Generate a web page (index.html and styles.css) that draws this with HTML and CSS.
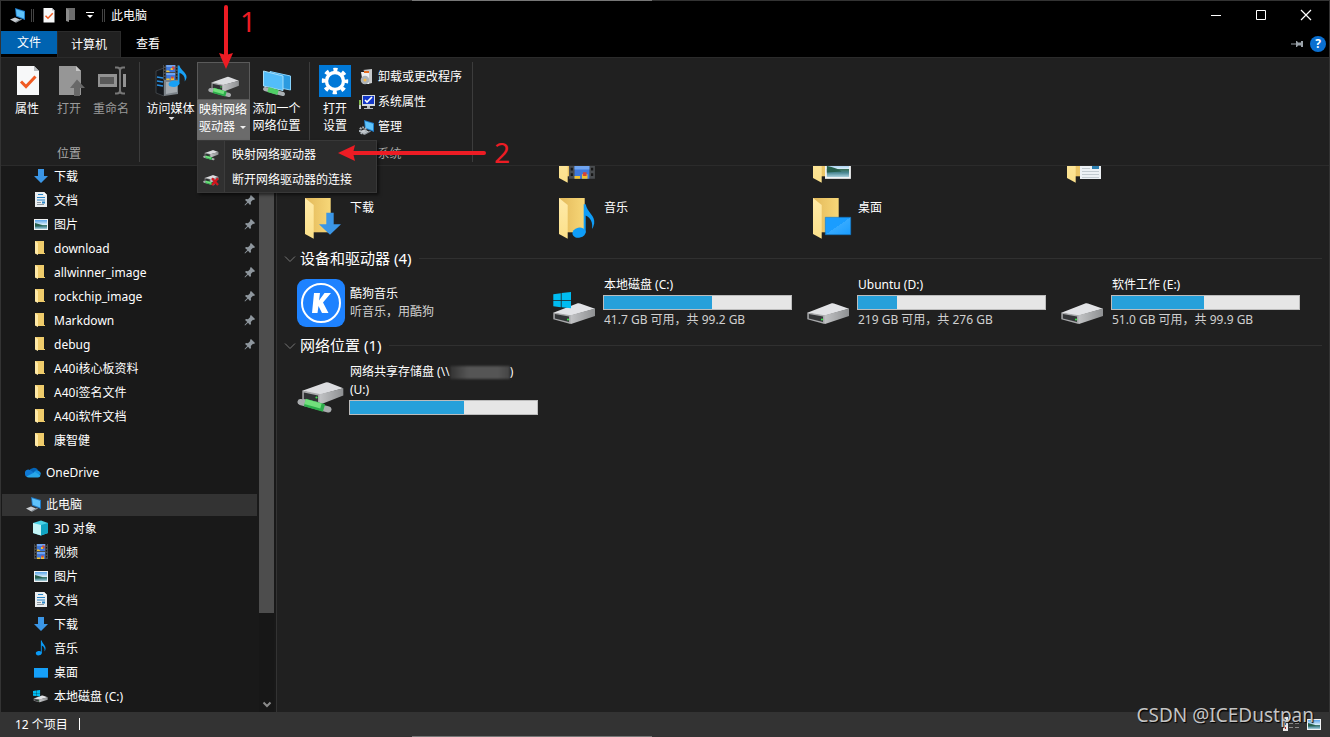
FILE: index.html
```html
<!DOCTYPE html>
<html lang="zh-CN">
<head>
<meta charset="utf-8">
<title>此电脑</title>
<link rel="stylesheet" href="styles.css">
</head>
<body>
<svg class="defs" aria-hidden="true">
  <defs>
    <linearGradient id="gold" x1="0" y1="0" x2="1" y2="0"><stop offset="0" stop-color="#e3b95a"/><stop offset="1" stop-color="#f7d778"/></linearGradient>
    <linearGradient id="flap" x1="0" y1="0" x2="0" y2="1"><stop offset="0" stop-color="#ffeaa8"/><stop offset="1" stop-color="#fbe08a"/></linearGradient>
    <linearGradient id="metal" x1="0" y1="0" x2="1" y2="0"><stop offset="0" stop-color="#c4c5c7"/><stop offset="1" stop-color="#8e9092"/></linearGradient>
    <linearGradient id="screen" x1="0" y1="0" x2="1" y2="1"><stop offset="0" stop-color="#1a9dff"/><stop offset=".5" stop-color="#1a9dff"/><stop offset=".5" stop-color="#35aaff"/><stop offset="1" stop-color="#1a9dff"/></linearGradient>
    <linearGradient id="sky" x1="0" y1="0" x2="0" y2="1"><stop offset="0" stop-color="#5aa5ea"/><stop offset=".5" stop-color="#d5ebf8"/><stop offset=".55" stop-color="#39705a"/><stop offset=".75" stop-color="#4c8996"/><stop offset="1" stop-color="#a9d0dc"/></linearGradient>
    <g id="folder">
      <path fill="url(#gold)" d="M8 4h25.700v34.300H8z"/>
      <path fill="url(#flap)" d="M8 4l8.700 7v33.700L8 40z"/>
    </g>
    <g id="drive">
      <path fill="#e2e3e6" d="M2.300 33.700 26.700 24.300Q28 24 29 24.500L44 29.700 18.500 37z"/>
      <path fill="url(#metal)" d="M18.500 36.500 44 29.500V37L20 45l-1.500-1z"/>
      <path fill="#a8a9ab" d="M2.300 33.500 19.500 36.300V45L2.300 40.300z"/>
      <path fill="#343638" d="M3.800 35 18 37.600V43L3.800 39.500z"/>
      <circle cx="17" cy="40.500" r="1.100" fill="#3fe04e"/>
    </g>
    <g id="netdrive">
      <path fill="#dcdde0" d="M5.300 18.700 28.500 10.500Q30 10 31.500 10.600L46.300 16.300 22 23z"/>
      <path fill="url(#metal)" d="M21.500 22.500 46.300 16.300V23.500L22 33z"/>
      <path fill="#a8a9ab" d="M5.300 18.500 22.500 22V33L5.300 28z"/>
      <path fill="#303234" d="M6.800 20.500 21 23.500V30L6.800 27z"/>
      <circle cx="19.500" cy="25.500" r="1.100" fill="#3fe04e"/>
      <path stroke="#a9acae" stroke-width="6" stroke-linecap="round" d="M3.500 30 31.500 37.500"/>
      <path stroke="#2cae4b" stroke-width="8" d="M8 30.500 27 36"/>
      <path stroke="#72e07c" stroke-width="5" d="M8 29.500 24 34"/>
    </g>
    <g id="winlogo"><path fill="#00bcf2" d="M0 2.300 7.500 1.200V8H0zM8.300 1.100 17.700 0V8H8.300zM0 8.700H7.500V15.300L0 14.300zM8.300 8.700H17.700V16.300L8.300 15.300z"/></g>
    <g id="note"><ellipse cx="28" cy="38.700" rx="6.700" ry="5" transform="rotate(-12 28 38.700)"/><path d="M32.700 10.300H34.700C36 18 44.500 22 43.200 29.500Q42.500 33 41 35C42 29 40 24 34.700 21.500V38.700H32.700z"/></g>
    <g id="photo"><path fill="#f1f3f4" d="M0 0h14v11H0z"/><path fill="url(#sky)" d="M1 1h12v9H1z"/><path fill="#27604e" d="M1 4Q6 5 9 7L1 7.500z"/></g>
    <g id="page"><path fill="#e9edf0" d="M0 0h9l3 3v12H0z"/><path fill="#fff" d="M9 0v3h3z"/><path stroke="#2684c7" stroke-width="1.200" d="M3 2.500h5M2 5.500h8M2 8h8"/><path stroke="#8b969e" d="M2 10.500h4M2 12.500h7"/><path fill="#2684c7" d="M7 9.500h3v2H7z"/></g>
    <g id="down"><path fill="#3b96e6" d="M4 0h6v7h4L7 14 0 7h4z"/></g>
    <g id="pc"><path fill="#1f7bc8" d="M5 1 15 4v9L6 9.500z"/><path fill="#5fc3fb" d="M6 2.300 14 4.800v6.700L6.800 8.700z"/><path fill="#c8ccd0" d="M0 12.500 5 10.500 10 12.500 5.500 15.500z"/><path fill="#8d959c" d="M5.500 14.500 11 11.800 12 12.600 6 15.800z"/></g>
    <g id="film"><path fill="#4a4d50" d="M0 0h14v15H0z"/><path fill="#3e78dc" d="M3 0h8v7H3zM3 8h8v7H3z"/><path fill="#6fa4f0" d="M3 0h8v2H3zM3 8h8v2H3z"/><path fill="#f2c230" d="M3 5.500h2L6.500 7H3zM7 3h2v2H7zM3 13.500h3V15H3zM7 12.500h3V15H7z"/><path fill="#d84335" d="M8 1.500h2.500v3H9zM7.500 11.500h2v2h-2z"/><path stroke="#171717" stroke-width="1.200" stroke-dasharray="1.500 1.500" d="M1.500 0v15M12.500 0v15"/></g>
    <g id="minifolder"><path fill="#f0cc6b" d="M0 0h9v12h1v1H3L0 12z"/><path fill="#ffe9a6" d="M0 0 3 2V14L0 12.500z"/></g>
    <g id="pin"><path fill="#8f979e" d="M6 0 10 4 9 5 8 4.800 5.800 7 6 9 5 10 3 7.700 0 10.500-.5 10 2.300 7 0 5 1 4l2 .2L5.200 2 5 1z"/></g>
    <g id="tick"><path fill="#f7f8f9" d="M0 0h17l5 5v24H0z"/><path fill="#b8bcc0" d="M17 0v5h5z"/><path fill="none" stroke="#f05a22" stroke-width="3" d="M4 15.500 9 20.500 18.500 10.500"/></g>
  </defs>
</svg>

<div class="window">
  <header class="titlebar">
    <svg class="i16" viewBox="0 0 16 16"><use href="#pc"/></svg>
    <span class="qsep"></span>
    <button class="quick" aria-label="属性"><svg class="i16" viewBox="-5 -2 32 32"><use href="#tick"/></svg></button>
    <button class="quick" aria-label="新建文件夹"><svg class="i16" viewBox="-2 0 16 16"><path fill="#6d6d6d" d="M1 1h9v12H4z"/><path fill="#8c8c8c" d="M1 1l3 2v12l-3-1z"/></svg></button>
    <button class="quick narrow" aria-label="自定义快速访问工具栏"><svg class="i8" viewBox="0 0 8 8"><path fill="#fff" d="M0 1h8v1H0zM1 4h6L4 7z"/></svg></button>
    <span class="qsep"></span>
    <h1 class="title">此电脑</h1>
    <div class="controls">
      <button aria-label="最小化"><svg class="i12" viewBox="0 0 12 12"><path stroke="#fff" d="M1 6.500h10"/></svg></button>
      <button aria-label="最大化"><svg class="i12" viewBox="0 0 12 12"><path fill="none" stroke="#fff" d="M1.500 1.500h9v9h-9z"/></svg></button>
      <button aria-label="关闭"><svg class="i12" viewBox="0 0 12 12"><path stroke="#fff" stroke-width="1.200" d="M1 1l10 10M11 1 1 11"/></svg></button>
    </div>
  </header>

  <div class="tabs">
    <button class="tab file">文件</button>
    <button class="tab active">计算机</button>
    <button class="tab">查看</button>
    <div class="tabs-end">
      <svg class="i12" viewBox="0 0 12 12"><path fill="#9aa2a9" d="M0 5.500h5V3h1l1 1.500h3V3h2v6h-2V7.500H7L6 9H5V6.500H0z"/></svg>
      <button class="help" aria-label="帮助">?</button>
    </div>
  </div>

  <section class="ribbon">
    <div class="group place">
      <div class="tools">
        <button class="tool"><svg class="i32" viewBox="0 0 32 32"><use href="#tick" x="6" y="1"/></svg><span>属性</span></button>
        <button class="tool off"><svg class="i32" viewBox="0 0 32 32"><path fill="#969696" d="M6 1h17l5 5v24H6z"/><path fill="#c6c6c6" d="M23 1v5h5z"/><path fill="#686868" d="M24 14.500 32 23h-5v8h-6v-8h-4z"/></svg><span>打开</span></button>
        <button class="tool off"><svg class="i32" viewBox="0 0 32 32"><path fill="#929292" d="M3 9h19v13H3zM28 9h3v13h-3z"/><path fill="#5a5a5a" d="M5 12h14v7H5z"/><path fill="none" stroke="#777" stroke-width="2" d="M20 2.500h2q3 0 3 3v20q0 3-3 3h-2M30 2.500h-2q-3 0-3 3M25 25.500q0 3 3 3h2"/></svg><span>重命名</span></button>
      </div>
      <div class="group-name">位置</div>
    </div>
    <div class="group net">
      <div class="tools">
        <button class="tool wide"><svg class="i32" viewBox="0 0 32 32"><path fill="#15181c" stroke="#555b60" stroke-width=".6" d="M1 6 9 3v28l-8-3z"/><path fill="#7b8288" d="M9 8 23 12v17L9 31z"/><path stroke="#278fe0" stroke-width="1.500" d="M2 12l6 1M2 16l6 1M2 20l6 1"/><path fill="#a5abb0" d="M11 17h11v10l-11 2z"/><g transform="translate(8) scale(1.100 1)"><use href="#film"/></g><g fill="#18a0f5" transform="translate(-4 -6) scale(.82 .64)"><use href="#note"/></g></svg><span>访问媒体</span><svg class="i8" viewBox="0 0 8 8"><path fill="#ddd" d="M1.500 0h6l-3 3z"/></svg></button>
        <div class="split">
          <button class="tool split-top" aria-label="映射网络驱动器"><svg class="i32" viewBox="0 -6 48 48"><use href="#netdrive"/></svg></button>
          <button class="split-name" aria-expanded="true">映射网络<br>驱动器<svg class="i8" viewBox="0 0 8 8"><path fill="#eee" d="M2 3h6L5 6z"/></svg></button>
          <div class="menu">
            <button><svg class="i16" viewBox="0 1 48 48"><use href="#netdrive"/></svg><span>映射网络驱动器</span></button>
            <button><svg class="i16" viewBox="0 1 48 48"><use href="#netdrive"/><path stroke="#d2161e" stroke-width="7" d="M27 20l18 20M45 20 27 40"/></svg><span>断开网络驱动器的连接</span></button>
          </div>
        </div>
        <button class="tool wide"><svg class="i32" viewBox="0 0 32 32"><path fill="#2b9be0" stroke="#87d2fb" d="M9 6.500 29.500 11v14L9 21z"/><path fill="#53bdfa" stroke="#a5def9" d="M2.500 6 22 11v14.500L2.500 21z"/><path stroke="#aab0b4" stroke-width="4" stroke-linecap="round" d="M4 24 22 29"/><path stroke="#50ce66" stroke-width="5" d="M7 24.500 17 27.500"/></svg><span>添加一个<br>网络位置</span></button>
      </div>
    </div>
    <div class="group system">
      <div class="tools">
        <button class="tool"><svg class="i32" viewBox="0 0 32 32"><path fill="#0078d7" d="M0 0h32v32H0z"/><circle cx="16" cy="16" r="8.500" fill="none" stroke="#fff" stroke-width="3.400"/><circle cx="16" cy="16" r="11.400" fill="none" stroke="#fff" stroke-width="3.600" stroke-dasharray="4.200 4.754" stroke-dashoffset="2"/></svg><span>打开<br>设置</span></button>
        <div class="small-tools">
          <button><svg class="i16" viewBox="0 0 16 16"><path fill="#c7c9cb" d="M4 1l9-1v14l-4 1V4z"/><path fill="#edeff0" d="M2 3h8v12H4z"/><path fill="#e56d20" d="M5 2h5v2H5z"/><circle cx="6" cy="11" r="4.300" fill="#aeb4b8"/><circle cx="6" cy="11" r="1.500" fill="#f5b94a"/></svg>卸载或更改程序</button>
          <button><svg class="i16" viewBox="0 0 16 16"><path fill="#d4dade" d="M3 1h13v11H3z"/><path fill="#1438c8" d="M4 2h11v8H4z"/><path fill="none" stroke="#fff" stroke-width="1.600" d="M6 6l2 2 5-5"/><path fill="#b8bdc1" d="M8 12h3v2h3v1H5v-1h3z"/><path fill="#84b94b" d="M0 6h2v5H0z"/><path fill="#c7cbce" d="M0 11h2v4H0z"/></svg>系统属性</button>
          <button><svg class="i16" viewBox="0 0 16 16"><use href="#pc"/><circle cx="4" cy="11.500" r="3" fill="none" stroke="#adb4ba" stroke-width="2.200" stroke-dasharray="1.800 .8"/></svg>管理</button>
        </div>
      </div>
      <div class="group-name">系统</div>
    </div>
  </section>

  <div class="body">
    <nav class="side">
      <div class="tree">
        <a href="#"><svg class="i16" viewBox="-1 -1 16 16"><use href="#down"/></svg>下载</a>
        <a href="#"><svg class="i16" viewBox="-2 0 16 16"><use href="#page"/></svg>文档<svg class="pin" viewBox="-1 -1 12 12"><use href="#pin"/></svg></a>
        <a href="#"><svg class="i16" viewBox="-1 -3 16 16"><use href="#photo"/></svg>图片<svg class="pin" viewBox="-1 -1 12 12"><use href="#pin"/></svg></a>
        <a href="#"><svg class="i16" viewBox="-2 -1 16 16"><use href="#minifolder"/></svg>download<svg class="pin" viewBox="-1 -1 12 12"><use href="#pin"/></svg></a>
        <a href="#"><svg class="i16" viewBox="-2 -1 16 16"><use href="#minifolder"/></svg>allwinner_image<svg class="pin" viewBox="-1 -1 12 12"><use href="#pin"/></svg></a>
        <a href="#"><svg class="i16" viewBox="-2 -1 16 16"><use href="#minifolder"/></svg>rockchip_image<svg class="pin" viewBox="-1 -1 12 12"><use href="#pin"/></svg></a>
        <a href="#"><svg class="i16" viewBox="-2 -1 16 16"><use href="#minifolder"/></svg>Markdown<svg class="pin" viewBox="-1 -1 12 12"><use href="#pin"/></svg></a>
        <a href="#"><svg class="i16" viewBox="-2 -1 16 16"><use href="#minifolder"/></svg>debug<svg class="pin" viewBox="-1 -1 12 12"><use href="#pin"/></svg></a>
        <a href="#"><svg class="i16" viewBox="-2 -1 16 16"><use href="#minifolder"/></svg>A40i核心板资料</a>
        <a href="#"><svg class="i16" viewBox="-2 -1 16 16"><use href="#minifolder"/></svg>A40i签名文件</a>
        <a href="#"><svg class="i16" viewBox="-2 -1 16 16"><use href="#minifolder"/></svg>A40i软件文档</a>
        <a href="#"><svg class="i16" viewBox="-2 -1 16 16"><use href="#minifolder"/></svg>康智健</a>
        <a href="#" class="root"><svg class="i16" viewBox="0 0 16 16"><path fill="#0364b8" d="M4 7a5 4.500 0 0 1 9-1l-3 5z"/><path fill="#0f78d4" d="M0 10a3.500 3.500 0 0 1 5-4l6 4-5 3H3Q0 13 0 10z"/><path fill="#1490df" d="M9 8q2-3 5-1 2 1 2 3.500L9 12z"/><path fill="#28a8ea" d="M1.500 12.500 10 8l5.500 3.500Q15 13.500 13 13.500H4q-2 0-2.500-1z"/></svg>OneDrive</a>
        <a href="#" class="root selected"><svg class="i16" viewBox="-1 0 16 16"><use href="#pc"/></svg>此电脑</a>
        <a href="#"><svg class="i16" viewBox="0 0 16 16"><path fill="#49d1e6" d="M0 3 8 .5 15 3v10l-7 2.500L0 13z"/><path fill="#c4f4f6" d="M0 3l8 2v10.500L0 13z"/><path fill="#10a5c4" d="M8 5l7-2v10l-7 2.500z"/></svg>3D 对象</a>
        <a href="#"><svg class="i16" viewBox="-1 0 16 16"><use href="#film"/></svg>视频</a>
        <a href="#"><svg class="i16" viewBox="-1 -3 16 16"><use href="#photo"/></svg>图片</a>
        <a href="#"><svg class="i16" viewBox="-2 0 16 16"><use href="#page"/></svg>文档</a>
        <a href="#"><svg class="i16" viewBox="-1 -1 16 16"><use href="#down"/></svg>下载</a>
        <a href="#"><svg class="i16" viewBox="15 9 36 36"><g fill="#0a9af5"><use href="#note"/></g></svg>音乐</a>
        <a href="#"><svg class="i16" viewBox="0 0 16 16"><path fill="#16a0f8" d="M1 4h14v10H1z"/><path fill="#0a6fb8" d="M1 13h14v1H1z"/></svg>桌面</a>
        <a href="#"><svg class="i16" viewBox="0 2 48 48"><use href="#drive"/><g transform="translate(0 8) scale(1.200)"><use href="#winlogo"/></g></svg>本地磁盘 (C:)</a>
      </div>
      <div class="scroll"><div class="thumb"></div><svg class="i12" viewBox="0 0 12 12"><path fill="none" stroke="#8a8a8a" stroke-width="2" d="M2.500 3.500 6 7l3.500-3.500"/></svg></div>
    </nav>

    <main class="files">
      <div class="grid folders">
        <div class="tile second"><svg class="i48" viewBox="0 0 48 48"><use href="#folder"/><g transform="translate(18 13) scale(1.850)"><use href="#film"/></g></svg></div>
        <div class="tile"><svg class="i48" viewBox="0 0 48 48"><use href="#folder"/><g transform="translate(20 20.500) scale(1.850)"><use href="#photo"/></g></svg></div>
        <div class="tile"><svg class="i48" viewBox="0 0 48 48"><use href="#folder"/><path fill="#edf1f4" d="M21 14h21v27H21z"/><path stroke="#c2cacf" d="M23 30.500h8M23 33.500h17M23 36.500h17M23 39.500h17"/><path fill="#2c7fb0" d="M33 28h7v3h-7z"/></svg></div>
        <div class="tile first"><svg class="i48" viewBox="0 0 48 48"><use href="#folder"/><path fill="#3b96e6" d="M29.300 18.700h7.400v11.600H44L33 40.700 22 30.300h7.300z"/></svg><span class="name">下载</span></div>
        <div class="tile"><svg class="i48" viewBox="0 0 48 48"><use href="#folder"/><g fill="#0f9df7"><use href="#note"/></g></svg><span class="name">音乐</span></div>
        <div class="tile"><svg class="i48" viewBox="0 0 48 48"><use href="#folder"/><path fill="url(#screen)" stroke="#0e78c9" stroke-width=".6" d="M20.300 23.300h25.400v17.400H20.300z"/></svg><span class="name">桌面</span></div>
      </div>

      <h2 class="heading"><svg class="i12" viewBox="0 0 12 12"><path fill="none" stroke="#777" d="M1 4.500 6 9.500l5-5"/></svg>设备和驱动器 (4)</h2>
      <div class="grid">
        <div class="tile app"><svg class="i48" viewBox="0 0 48 48"><rect width="48" height="48" rx="9" fill="#1e82ff"/><circle cx="24" cy="24" r="19" fill="none" stroke="#fff" stroke-width="2"/><path fill="#fff" d="M17 14h6l-1 7.500L27.500 14H34L26 23.500 31.500 34H25l-3.500-7L20.500 34H15z"/></svg><div class="info"><span>酷狗音乐</span><span class="dim">听音乐，用酷狗</span></div></div>
        <div class="tile"><svg class="i48" viewBox="0 0 48 48"><use href="#drive"/><use href="#winlogo" x="2.300" y="13"/></svg><div class="info"><span>本地磁盘 (C:)</span><div class="bar"><div style="width:58%"></div></div><span class="dim">41.7 GB 可用，共 99.2 GB</span></div></div>
        <div class="tile"><svg class="i48" viewBox="0 0 48 48"><use href="#drive"/></svg><div class="info"><span>Ubuntu (D:)</span><div class="bar"><div style="width:21%"></div></div><span class="dim">219 GB 可用，共 276 GB</span></div></div>
        <div class="tile"><svg class="i48" viewBox="0 0 48 48"><use href="#drive"/></svg><div class="info"><span>软件工作 (E:)</span><div class="bar"><div style="width:49%"></div></div><span class="dim">51.0 GB 可用，共 99.9 GB</span></div></div>
      </div>

      <h2 class="heading"><svg class="i12" viewBox="0 0 12 12"><path fill="none" stroke="#777" d="M1 4.500 6 9.500l5-5"/></svg>网络位置 (1)</h2>
      <div class="grid">
        <div class="tile"><svg class="i48" viewBox="0 -6 48 48"><use href="#netdrive"/></svg><div class="info"><span>网络共享存储盘 (\\<i class="masked"></i>)</span><span>(U:)</span><div class="bar"><div style="width:61%"></div></div></div></div>
      </div>
    </main>
  </div>

  <footer class="status">
    <span>12 个项目</span><span class="caret"></span>
    <div class="views">
      <button aria-label="详细信息"><svg class="i18" viewBox="0 0 18 14"><path fill="#e8e8e8" d="M1 0h5v14H1z"/><path fill="#2a66b0" d="M3 2h1v2H3zM3 6h1v2H3z"/><path fill="#b22" d="M3 10h1v2H3z"/><path stroke="#8a8a8a" d="M7 6.500h4M13 6.500h4M7 10.500h4M13 10.500h4"/></svg></button>
      <button aria-label="大图标"><svg class="i14" viewBox="0 0 14 11"><use href="#photo"/></svg></button>
    </div>
  </footer>
</div>

<svg class="marks" aria-hidden="true">
  <path stroke="#ed1c24" stroke-width="4" stroke-linecap="round" d="M226 7v48M484 153H352"/>
  <path fill="#ed1c24" d="M226 69 219 53l7 2 7-2zM338 153l17-8-2 8 2 8z"/>
  <text x="240" y="32">1</text>
  <text x="494" y="163">2</text>
</svg>
<div class="watermark">CSDN @ICEDustpan</div>
</body>
</html>
```
FILE: styles.css
```css
* { box-sizing: border-box; }

body {
  margin: 0;
  height: 100vh;
  overflow: hidden;
  position: relative;
  padding: 1px;
  background: linear-gradient(to right, #333 31%, #777 31%, #777 49%, #333 49%);
  color: #fff;
  font: 12px/17px "Noto Sans", "Noto Sans CJK SC", sans-serif;
}

button {
  border: 0;
  padding: 0;
  background: none;
  color: inherit;
  font: inherit;
}

a { color: inherit; text-decoration: none; }
svg { display: block; flex: none; }

.defs { position: absolute; width: 0; height: 0; }
.i8 { width: 8px; height: 8px; }
.i12 { width: 12px; height: 12px; }
.i14 { width: 14px; height: 11px; }
.i16 { width: 16px; height: 16px; }
.i18 { width: 18px; height: 14px; }
.i32 { width: 32px; height: 32px; }
.i48 { width: 48px; height: 48px; }

.window {
  height: 100%;
  display: flex;
  flex-direction: column;
  background: #202020;
}

/* title bar */
.titlebar {
  display: flex;
  align-items: center;
  height: 30px;
  flex: none;
  padding: 0 1px 2px 9px;
  background: #000;
}
.qsep {
  width: 3px;
  height: 13px;
  margin: 0 4px 0 5px;
  border: 1px solid #444;
  border-width: 0 1px;
}
.quick { width: 22px; padding: 0 3px; }
.quick.narrow { padding: 0 4px; width: 16px; }
.narrow + .qsep { margin: 0 6px 0 4px; }
.title { margin: 0; font-size: 12px; font-weight: 400; }
.controls { display: flex; margin-left: auto; height: 100%; }
.controls button { width: 45px; display: grid; place-items: center; }

/* ribbon tabs */
.tabs {
  display: flex;
  height: 26px;
  flex: none;
  background: #000;
}
.tab { width: 54px; border-bottom: 2px solid transparent; }
.tab.file { width: 56px; height: 23px; border: 0; background: #0063b1; }
.tab.active {
  width: 64px;
  border: 1px solid #2b2b2b;
  border-bottom: 0;
  background: #202020;
}
.tabs-end {
  display: flex;
  align-items: center;
  gap: 7px;
  margin-left: auto;
  padding-right: 3px;
}
.help {
  width: 16px;
  height: 16px;
  border-radius: 50%;
  background: #0a6fd0;
  font-weight: 700;
  line-height: 16px;
}

/* ribbon */
.ribbon {
  display: flex;
  height: 109px;
  flex: none;
  border: 1px solid #2b2b2b;
  border-width: 1px 0;
}
.group {
  display: flex;
  flex-direction: column;
  margin: 4px 0 3px;
  padding: 0 7px 0 5px;
  border-right: 1px solid #3c3c3c;
}
.group.net { padding: 0 6px 0 4px; }
.group.system { padding-left: 4px; }
.tools { display: flex; flex: 1; }
.tool {
  display: flex;
  flex-direction: column;
  align-items: center;
  width: 42px;
  padding-top: 3px;
  white-space: nowrap;
}
.tool span { margin-top: 3px; }
.tool.wide { width: 53px; }
.tool.off { color: #9a9a9a; }
.group-name {
  height: 17px;
  text-align: center;
  color: #a8a8a8;
}
.split { position: relative; width: 53px; }
.split-top {
  width: 53px;
  height: 38px;
  border: 1px solid #5a5a5a;
  background: #343434;
}
.split-name {
  width: 53px;
  height: 40px;
  padding: 0 0 5px 2px;
  background: #6b6b6b;
  text-align: left;
  white-space: nowrap;
}
.split-name svg { display: inline-block; margin-left: 3px; }
.menu {
  position: absolute;
  top: 78px;
  left: 0;
  z-index: 2;
  padding: 1px 0 0;
  border: 1px solid #383838;
  background: linear-gradient(to right, #303030 26px, #3c3c3c 26px, #3c3c3c 27px, #2b2b2b 27px);
  box-shadow: 2px 2px 3px #0008;
}
.menu button {
  display: flex;
  align-items: center;
  width: 178px;
  height: 25px;
  padding-left: 5px;
  gap: 13px;
  white-space: nowrap;
}
.small-tools { margin: 2px 3px 0; }
.small-tools button {
  display: flex;
  align-items: center;
  gap: 3px;
  height: 25px;
  white-space: nowrap;
}

/* content */
.body { display: flex; flex: 1; min-height: 0; }
.side {
  display: flex;
  width: 276px;
  flex: none;
  border-right: 1px solid #333;
  background: #191919;
  overflow: hidden;
}
.tree { display: flex; flex-direction: column; gap: 2px; flex: 1; }
.tree a {
  display: flex;
  align-items: center;
  flex: none;
  height: 22px;
  margin: 0 1px;
  padding: 0 1px 2px 31px;
  gap: 5px;
}
.tree .root { margin-top: 8px; padding-left: 23px; }
.tree .selected { background: #333; }
.pin { width: 12px; height: 12px; margin-left: auto; }
.scroll {
  display: flex;
  flex-direction: column;
  align-items: center;
  justify-content: space-between;
  width: 15px;
  margin: 0 2px 0 1px;
  padding-bottom: 1px;
  background: #171717;
}
.thumb { width: 15px; height: 82%; background: #4d4d4d; }

.files { flex: 1; padding: 0 7px 0 7px; overflow: hidden; }
.grid {
  display: grid;
  grid-template-columns: repeat(auto-fill, 254px);
  margin-left: 13px;
}
.folders { grid-template-columns: repeat(4, 254px); margin-top: -28px; row-gap: 8px; }
.second { grid-column: 2; }
.first { grid-column: 1; }
.tile { display: flex; align-items: center; gap: 4px; min-height: 48px; }
.name { align-self: flex-start; margin: 5px 0 0 1px; }
.info { display: flex; flex-direction: column; }
.info span { padding-left: 1px; height: 18px; line-height: 18px; white-space: nowrap; }
.dim { color: #d0d0d0; }
.bar {
  width: 189px;
  height: 15px;
  margin: 1px 0;
  border: 1px solid #bcbcbc;
  background: #e6e6e6;
}
.bar div { height: 100%; background: #26a0da; }
.masked {
  display: inline-block;
  width: 60px;
  height: 13px;
  vertical-align: middle;
  background: linear-gradient(to right, #333, #555 30%, #555 80%, #444);
  filter: blur(1px);
}
.heading {
  display: flex;
  align-items: center;
  gap: 4px;
  height: 24px;
  margin: 4px 0 6px;
  font-size: 15px;
  font-weight: 400;
}
.heading::after {
  content: "";
  flex: 1;
  height: 1px;
  margin-left: 4px;
  background: #303030;
}

/* status bar */
.status {
  display: flex;
  align-items: center;
  height: 24px;
  flex: none;
  padding: 0 8px 0 14px;
  background: #333;
}
.caret { width: 1px; height: 12px; margin-left: 11px; background: #fff; }
.views { display: flex; gap: 7px; margin-left: auto; }

/* annotations */
.marks {
  position: absolute;
  top: 0;
  left: 0;
  z-index: 3;
  width: 100%;
  height: 100%;
  pointer-events: none;
}
.marks text { fill: #ed1c24; font-size: 28px; }
.watermark {
  position: absolute;
  right: 16px;
  bottom: 8px;
  z-index: 3;
  color: #c4c4c4;
  font-size: 19px;
  line-height: 28px;
  text-shadow: 1px 1px 1px #000;
}
```
